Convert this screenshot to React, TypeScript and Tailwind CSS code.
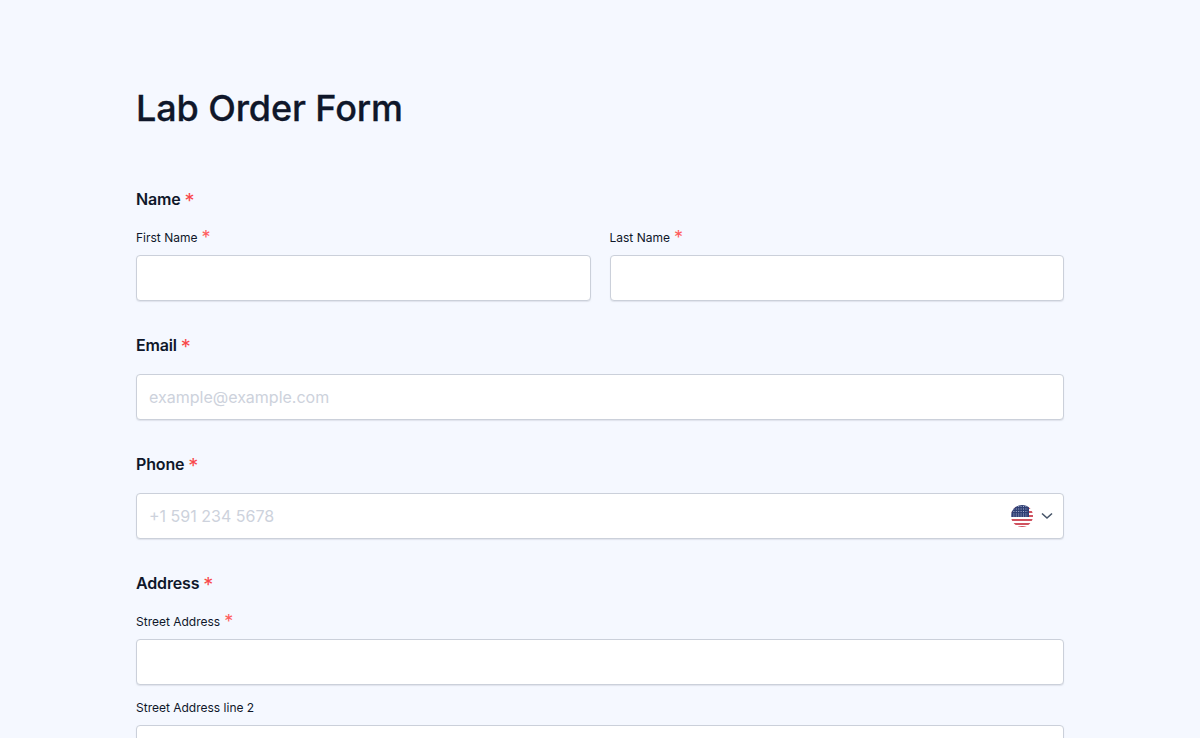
const Star = ({ small }: { small?: boolean }) => (
  <span
    className={
      small
        ? "relative top-[2px] ml-1 text-[18px] leading-[0] font-normal text-[#ff5c5c]"
        : "relative top-[3px] ml-1 text-[20px] leading-[0] font-normal text-[#f9484a]"
    }
  >
    *
  </span>
);

const inputClass =
  "block h-[46px] w-full rounded-[4px] border border-[#cbd0da] bg-white px-3 text-base text-[#0a1551] shadow-[0_1px_1px_rgba(203,208,218,0.5)] outline-none placeholder:text-[#cdd2dc]";

function Heading({ children }: { children: string }) {
  return (
    <h2 className="h-6 text-base leading-6 font-semibold tracking-[-0.01em] text-[#0f172a]">
      {children}
      <Star />
    </h2>
  );
}

function SubLabel({ children, required }: { children: string; required?: boolean }) {
  return (
    <label className="mb-[7px] block h-[21px] pt-px text-xs leading-5 text-[#0f172a]">
      {children}
      {required && <Star small />}
    </label>
  );
}

function FlagUS() {
  return (
    <svg width="24" height="24" viewBox="0 0 24 24" className="shrink-0">
      <defs>
        <clipPath id="flag-circle">
          <circle cx="12" cy="12" r="11" />
        </clipPath>
      </defs>
      <g clipPath="url(#flag-circle)">
        <rect width="24" height="24" fill="#fff" />
        <rect y="3" width="24" height="2" fill="#d0525f" />
        <rect y="7" width="24" height="2" fill="#d0525f" />
        <rect y="11" width="24" height="2" fill="#d0525f" />
        <rect y="15" width="24" height="2" fill="#d0525f" />
        <rect y="19" width="24" height="2" fill="#d0525f" />
        <rect y="22" width="24" height="2" fill="#d0525f" />
        <rect x="0" y="0" width="19" height="13" fill="#2f3f74" />
        <path d="M1 2.5h17M1 5h17M1 7.5h17M1 10h17M1 12h17" stroke="#aab2cf" strokeWidth="1" strokeDasharray="1 1.4" />
      </g>
    </svg>
  );
}

export default function App() {
  return (
    <div className="h-[738px] overflow-hidden bg-[#f5f8ff] font-['Inter',sans-serif]">
      <div className="mx-auto w-[928px] pt-[86px]">
        <h1 className="mb-[57px] text-4xl leading-[44px] font-medium tracking-[-0.003em] text-[#0f172a] [-webkit-text-stroke:0.3px_#0f172a]">
          Lab Order Form
        </h1>

        <section className="mb-8">
          <Heading>Name</Heading>
          <div className="mt-4 grid grid-cols-2 gap-[19px]">
            <div>
              <SubLabel required>First Name</SubLabel>
              <input className={inputClass} />
            </div>
            <div>
              <SubLabel required>Last Name</SubLabel>
              <input className={inputClass} />
            </div>
          </div>
        </section>

        <section className="mb-8">
          <div className="mb-[17px]">
            <Heading>Email</Heading>
          </div>
          <input className={inputClass} placeholder="example@example.com" />
        </section>

        <section className="mb-8">
          <div className="mb-[17px]">
            <Heading>Phone</Heading>
          </div>
          <div className="relative">
            <input className={inputClass} placeholder="+1 591 234 5678" />
            <div className="absolute top-[11px] right-[10px] flex items-center gap-[6px] text-[#475569]">
              <FlagUS />
              <svg width="14" height="14" viewBox="0 0 14 14" fill="none" stroke="currentColor" strokeWidth="1.6">
                <path d="M2 4.5l5 4.5L12 4.5" />
              </svg>
            </div>
          </div>
        </section>

        <section>
          <Heading>Address</Heading>
          <div className="mt-4">
            <SubLabel required>Street Address</SubLabel>
            <input className={inputClass} />
          </div>
          <div className="mt-3">
            <SubLabel>Street Address line 2</SubLabel>
            <input className={inputClass} />
          </div>
        </section>
      </div>
    </div>
  );
}
